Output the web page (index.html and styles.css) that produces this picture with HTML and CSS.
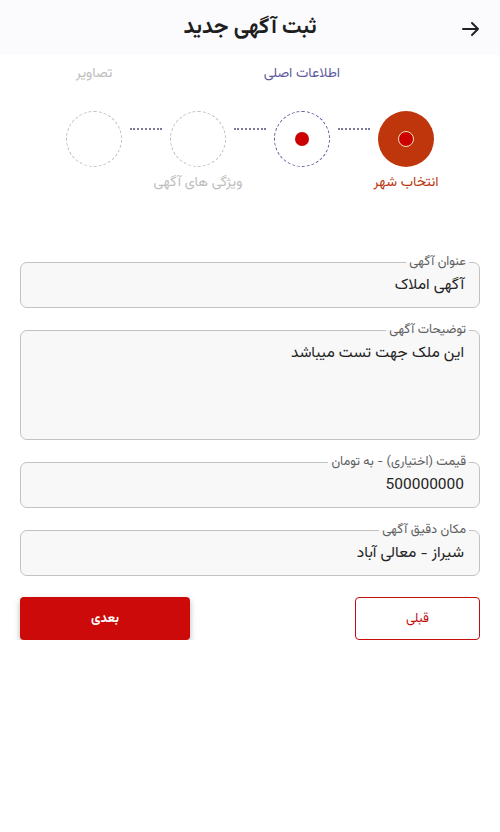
FILE: index.html
```html
<!DOCTYPE html>
<html lang="fa" dir="rtl">
<head>
<meta charset="utf-8">
<link rel="stylesheet" href="styles.css">
</head>
<body>
<header class="topbar">
  <svg class="back" width="18" height="16" viewBox="0 0 18 16"><path d="M1 8H16M10 2L16 8L10 14" fill="none" stroke="#222" stroke-width="2" stroke-linecap="round" stroke-linejoin="round"/></svg>
  <h1 class="title">ثبت آگهی جدید</h1>
</header>

<section class="stepper">
  <div class="step">
    <span class="step-label top"></span>
    <div class="circle active"><span class="dot ring"></span></div>
    <span class="step-label bottom label-active">انتخاب شهر</span>
  </div>
  <div class="connector"></div>
  <div class="step">
    <span class="step-label top label-current">اطلاعات اصلی</span>
    <div class="circle current"><span class="dot"></span></div>
    <span class="step-label bottom"></span>
  </div>
  <div class="connector"></div>
  <div class="step">
    <span class="step-label top"></span>
    <div class="circle"></div>
    <span class="step-label bottom">ویژگی های آگهی</span>
  </div>
  <div class="connector"></div>
  <div class="step">
    <span class="step-label top">تصاویر</span>
    <div class="circle"></div>
    <span class="step-label bottom"></span>
  </div>
</section>

<form class="form">
  <fieldset class="field">
    <legend>عنوان آگهی</legend>
    <div class="value">آگهی املاک</div>
  </fieldset>
  <fieldset class="field tall">
    <legend>توضیحات آگهی</legend>
    <div class="value">این ملک جهت تست میباشد</div>
  </fieldset>
  <fieldset class="field">
    <legend>قیمت (اختیاری) - به تومان</legend>
    <div class="value">500000000</div>
  </fieldset>
  <fieldset class="field">
    <legend>مکان دقیق آگهی</legend>
    <div class="value">شیراز - معالی آباد</div>
  </fieldset>
  <div class="actions">
    <button type="button" class="btn btn-outline">قبلی</button>
    <button type="button" class="btn btn-primary">بعدی</button>
  </div>
</form>
</body>
</html>
```

FILE: styles.css
```css
* { box-sizing: border-box; }
html, body { margin: 0; background: #fff; }
body {
  font-family: "Vazirmatn", "Noto Sans Arabic", "DejaVu Sans", sans-serif;
  color: #222;
  width: 500px;
}
.topbar {
  height: 55px;
  background: #fbfbfd;
  display: flex;
  align-items: center;
  padding: 0 20px;
  position: relative;
}
.back { flex: none; margin-top: 2px; }
.title {
  flex: 1;
  margin: 0 0 0 18px;
  text-align: center;
  font-size: 21.5px;
  font-weight: 700;
  color: #1e1e1e;
}
.stepper {
  display: flex;
  justify-content: center;
  align-items: center;
  padding-top: 9px;
}
.step {
  width: 56px;
  display: flex;
  flex-direction: column;
  align-items: center;
}
.step-label {
  height: 20px;
  line-height: 20px;
  white-space: nowrap;
  font-size: 14px;
  color: #bdbdbd;
}
.step-label.top { margin-bottom: 27px; }
.step-label.bottom { margin-top: 6px; }
.label-active { color: #b8360f; }
.label-current { color: #5d5a9e; }
.circle {
  width: 56px;
  height: 56px;
  border-radius: 50%;
  border: 1px dashed #bdbdbd;
  display: flex;
  align-items: center;
  justify-content: center;
  flex: none;
}
.circle.current { border: 1.5px dashed #5b58a0; }
.circle.active { border: none; background: #bf360c; }
.dot {
  width: 14px;
  height: 14px;
  border-radius: 50%;
  background: #cc0000;
}
.dot.ring {
  width: 16px;
  height: 16px;
  border: 1.5px solid #f5e0b8;
}
.connector {
  width: 32px;
  margin: 0 8px;
  border-top: 2px dotted #7a7898;
  align-self: center;
}
.form {
  padding: 61px 20px 0;
  display: flex;
  flex-direction: column;
  gap: 14px;
}
.field {
  margin: 0;
  padding: 0 15px 0 15px;
  border: 1px solid #c2c2c2;
  border-radius: 7px;
  background: #f8f8f8;
  height: 54px;
  min-width: 0;
}
.field legend {
  font-size: 12.8px;
  color: #5f5f5f;
  padding: 0 3px;
  margin-right: -5px;
  line-height: 16px;
}
.field.tall { height: 118px; }
.value {
  font-size: 15.5px;
  line-height: 22px;
  color: #222;
  margin-top: 4px;
}
.actions {
  display: flex;
  justify-content: space-between;
  margin-top: 7px;
}
.btn {
  font-family: inherit;
  height: 43px;
  border-radius: 4px;
  font-size: 13px;
  cursor: pointer;
}
.btn-outline {
  width: 125px;
  background: #fff;
  border: 1px solid #c40d0d;
  color: #c40d0d;
}
.btn-primary {
  width: 170px;
  background: #cc0a0a;
  border: none;
  color: #fff;
  font-weight: 700;
  box-shadow: 0 3px 6px rgba(0,0,0,0.28);
}
```
